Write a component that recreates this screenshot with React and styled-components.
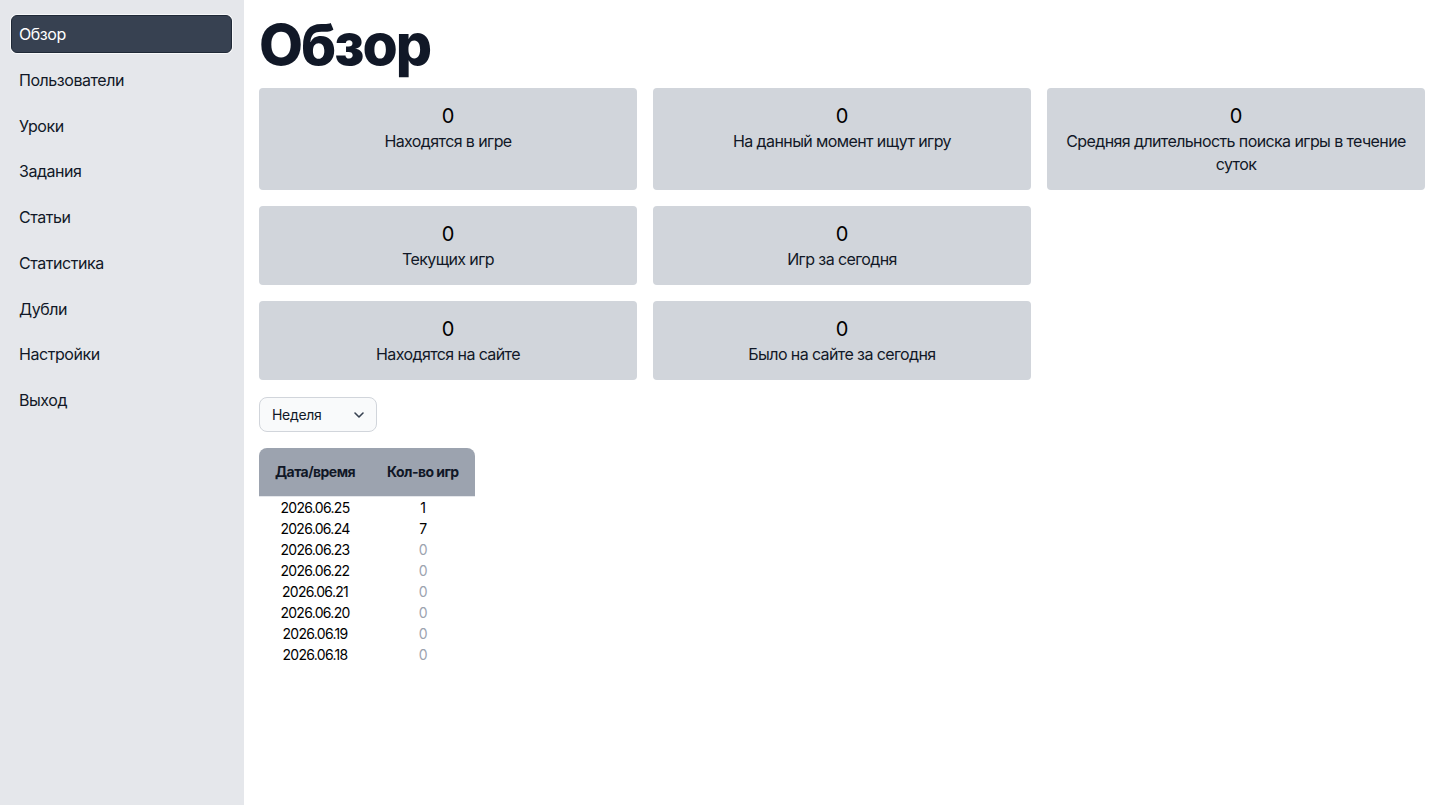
import styled, { createGlobalStyle } from "styled-components";

const GlobalStyle = createGlobalStyle`
  html, body {
    margin: 0;
    padding: 0;
    background: #ffffff;
    font-family: Inter, "Noto Sans", sans-serif;
    color: #111827;
  }
  * {
    box-sizing: border-box;
  }
`;

const navItems = [
  "Обзор",
  "Пользователи",
  "Уроки",
  "Задания",
  "Статьи",
  "Статистика",
  "Дубли",
  "Настройки",
  "Выход",
];

const cardRows = [
  [
    { value: 0, label: "Находятся в игре" },
    { value: 0, label: "На данный момент ищут игру" },
    { value: 0, label: "Средняя длительность поиска игры в течение суток" },
  ],
  [
    { value: 0, label: "Текущих игр" },
    { value: 0, label: "Игр за сегодня" },
  ],
  [
    { value: 0, label: "Находятся на сайте" },
    { value: 0, label: "Было на сайте за сегодня" },
  ],
];

const games = [
  { date: "2026.06.25", count: 1 },
  { date: "2026.06.24", count: 7 },
  { date: "2026.06.23", count: 0 },
  { date: "2026.06.22", count: 0 },
  { date: "2026.06.21", count: 0 },
  { date: "2026.06.20", count: 0 },
  { date: "2026.06.19", count: 0 },
  { date: "2026.06.18", count: 0 },
];

const App = () => {
  return (
    <Layout>
      <GlobalStyle />
      <Sidebar>
        {navItems.map((item, i) => (
          <NavItem key={item} $active={i === 0}>
            {item}
          </NavItem>
        ))}
      </Sidebar>

      <Main>
        <Title>Обзор</Title>

        <Cards>
          {cardRows.map((row, r) =>
            row.map((card, c) => (
              <Card key={`${r}-${c}`} style={{ gridRow: r + 1 }}>
                <CardValue>{card.value}</CardValue>
                <CardLabel>{card.label}</CardLabel>
              </Card>
            ))
          )}
        </Cards>

        <SelectWrap>
          <Select defaultValue="week">
            <option value="week">Неделя</option>
            <option value="month">Месяц</option>
          </Select>
          <Chevron viewBox="0 0 20 20" fill="none">
            <path
              d="M6 8l4 4 4-4"
              stroke="#374151"
              strokeWidth="1.6"
              strokeLinecap="round"
              strokeLinejoin="round"
            />
          </Chevron>
        </SelectWrap>

        <Table>
          <thead>
            <tr>
              <Th>Дата/время</Th>
              <Th>Кол-во игр</Th>
            </tr>
          </thead>
          <tbody>
            {games.map((g) => (
              <tr key={g.date}>
                <Td>{g.date}</Td>
                <Td $muted={g.count === 0}>{g.count}</Td>
              </tr>
            ))}
          </tbody>
        </Table>
      </Main>
    </Layout>
  );
};

export default App;

const Layout = styled.div`
  display: flex;
  min-height: 805px;
`;

const Sidebar = styled.nav`
  width: 244px;
  flex-shrink: 0;
  background: #e5e7eb;
  padding: 15px 12px 15px 11px;
  display: flex;
  flex-direction: column;
  gap: 7.75px;
`;

const NavItem = styled.a`
  display: block;
  padding: 6px 7px;
  font-size: 16px;
  line-height: 24px;
  letter-spacing: -0.45px;
  border-radius: 6px;
  border: 1px solid ${(p) => (p.$active ? "#1f2937" : "transparent")};
  background: ${(p) => (p.$active ? "#374151" : "transparent")};
  color: ${(p) => (p.$active ? "#ffffff" : "#111827")};
  box-shadow: ${(p) =>
    p.$active ? "0 0 0 1px rgba(255, 255, 255, 0.7)" : "none"};
  cursor: pointer;
`;

const Main = styled.main`
  flex: 1;
  padding: 15px;
  display: flex;
  flex-direction: column;
  align-items: flex-start;
`;

const Title = styled.h1`
  margin: 0 0 13px;
  font-size: 57px;
  line-height: 60px;
  font-weight: 800;
  color: #111827;
  letter-spacing: -2px;
`;

const Cards = styled.div`
  width: 100%;
  display: grid;
  grid-template-columns: repeat(3, 1fr);
  gap: 16px;
  margin-bottom: 17px;
`;

const Card = styled.div`
  background: #d1d5db;
  border-radius: 4px;
  padding: 14px 16px;
  text-align: center;
`;

const CardValue = styled.div`
  font-size: 20px;
  line-height: 28px;
  color: #000000;
`;

const CardLabel = styled.div`
  font-size: 16px;
  line-height: 23px;
  letter-spacing: -0.6px;
  color: #111827;
`;

const SelectWrap = styled.div`
  position: relative;
  width: 118px;
  margin-bottom: 16px;
`;

const Select = styled.select`
  appearance: none;
  width: 100%;
  height: 35px;
  padding: 0 30px 0 12px;
  border: 1px solid #d1d5db;
  border-radius: 8px;
  background: #f9fafb;
  font-family: Inter, "Noto Sans", sans-serif;
  font-size: 14px;
  letter-spacing: -0.3px;
  color: #111827;
  outline: none;
`;

const Chevron = styled.svg`
  position: absolute;
  right: 8px;
  top: 8px;
  width: 20px;
  height: 20px;
  pointer-events: none;
`;

const Table = styled.table`
  border-collapse: collapse;
  border-spacing: 0;
  font-size: 14px;
`;

const Th = styled.th`
  background: #9ca3af;
  height: 48px;
  padding: 0 16px;
  font-weight: 700;
  font-size: 14px;
  letter-spacing: -0.55px;
  color: #111827;
  text-align: center;
  border-bottom: 1px solid #e5e7eb;

  &:first-child {
    border-top-left-radius: 8px;
  }
  &:last-child {
    border-top-right-radius: 8px;
  }
`;

const Td = styled.td`
  padding: 0 16px;
  line-height: 21px;
  text-align: center;
  letter-spacing: -0.7px;
  color: ${(p) => (p.$muted ? "#9ca3af" : "#000000")};
`;
